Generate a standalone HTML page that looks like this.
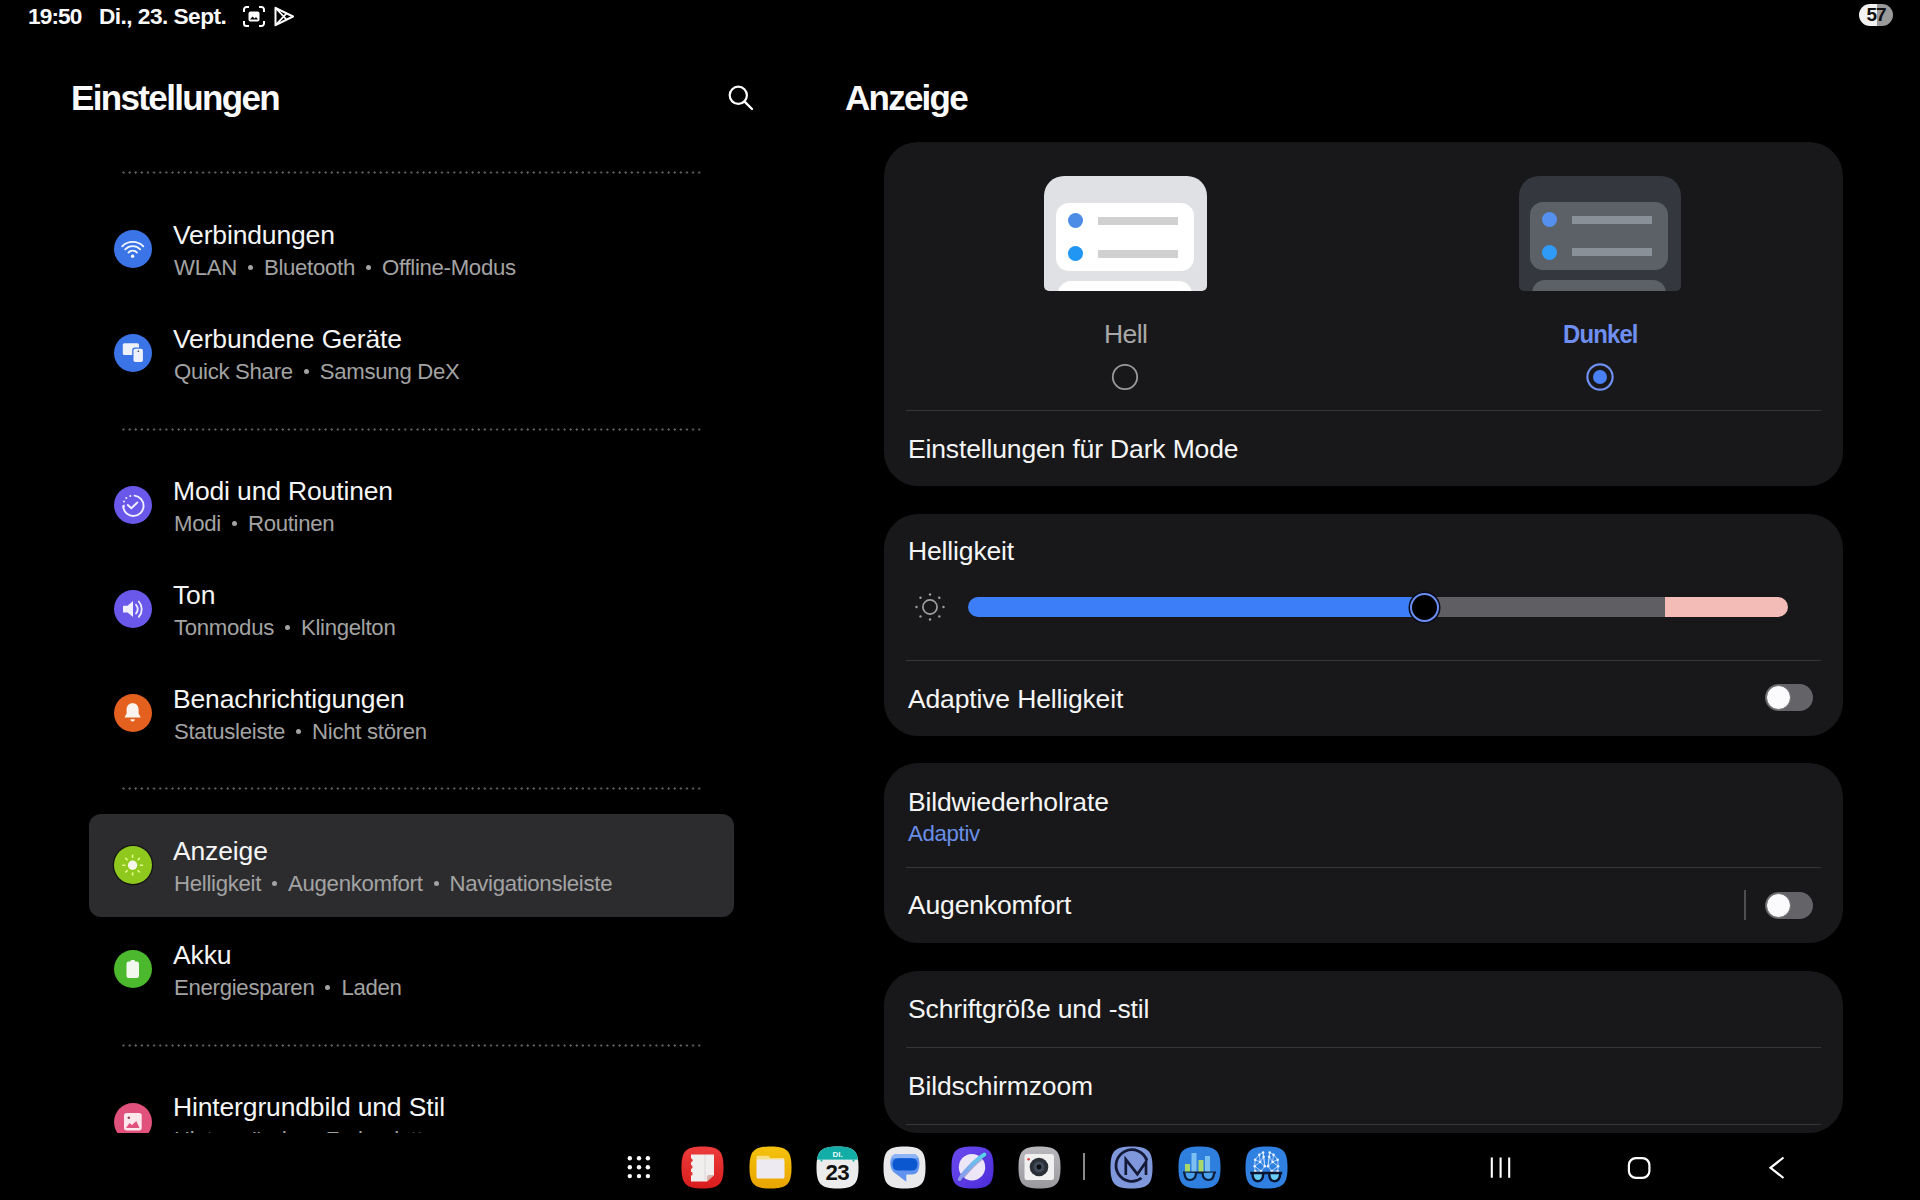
<!DOCTYPE html>
<html><head><meta charset="utf-8">
<style>
*{margin:0;padding:0;box-sizing:border-box}
html,body{width:1920px;height:1200px;background:#000;overflow:hidden}
body{position:relative;font-family:"Liberation Sans",sans-serif;color:#fafafa}
.a{position:absolute;white-space:nowrap}
svg{position:absolute;overflow:visible}
.t{font-size:26.5px;line-height:30px;color:#f5f5f5;letter-spacing:-0.15px}
.s{font-size:22.2px;line-height:26px;color:#a3a3a3;letter-spacing:-0.3px}
.dot{display:inline-block;width:5px;height:5px;border-radius:50%;background:#a3a3a3;vertical-align:middle;margin:0 11px;position:relative;top:-2px}
.sep{position:absolute;left:122px;width:582px;height:3px;background-image:radial-gradient(circle at 1.5px 1.5px,#666 0.9px,transparent 1.3px);background-size:6.14px 3px}
.card{position:absolute;left:884px;width:959px;background:#18181a;border-radius:34px}
.hr{position:absolute;left:906px;width:915px;height:1px;background:#363638}
.clip{position:absolute;left:0;top:0;width:860px;height:1133px;overflow:hidden}
</style></head><body>
<!-- STATUS BAR -->
<div class="a" id="time" style="left:28px;top:2px;font-size:22.7px;font-weight:bold;line-height:28px;letter-spacing:-0.9px">19:50</div>
<div class="a" id="date" style="left:99px;top:2px;font-size:22.7px;font-weight:bold;line-height:28px;letter-spacing:-0.55px">Di., 23. Sept.</div>
<svg style="left:243px;top:6px" width="22" height="21" viewBox="0 0 22 21">
 <path d="M1 6V3.5A2.5 2.5 0 0 1 3.5 1H6M16 1h2.5A2.5 2.5 0 0 1 21 3.5V6M21 15v2.5A2.5 2.5 0 0 1 18.5 20H16M6 20H3.5A2.5 2.5 0 0 1 1 17.5V15" fill="none" stroke="#fff" stroke-width="2"/>
 <rect x="5.5" y="5.5" width="11" height="10" rx="2" fill="#fff"/>
 <path d="M7 13.5l2.5-3 2 2 1.5-1.5 2 2.5z" fill="#000"/>
</svg>
<svg style="left:273px;top:6px" width="22" height="21" viewBox="0 0 22 21">
 <path d="M2.5 1.8L20 10.5L2.5 19.2Z" fill="none" stroke="#fff" stroke-width="2" stroke-linejoin="round"/>
 <path d="M2.8 2.2L13.5 13.5M2.8 18.8L13.5 7.5" fill="none" stroke="#fff" stroke-width="1.8"/>
</svg>
<!-- battery -->
<div class="a" style="left:1859px;top:4px;width:34px;height:22px;border-radius:11px;background:linear-gradient(90deg,#f2f2f2 0,#f2f2f2 18px,#9a9a9a 18px,#9a9a9a 100%)"></div>
<div class="a" id="batt" style="left:1862px;top:3px;width:28px;text-align:center;font-size:19px;font-weight:bold;line-height:24px;color:#111;letter-spacing:-1px">57</div>

<!-- HEADERS -->
<div class="a" id="ttl" style="left:71px;top:78px;font-size:35px;font-weight:bold;line-height:40px;letter-spacing:-1.65px">Einstellungen</div>
<svg style="left:728px;top:85px" width="26" height="26" viewBox="0 0 26 26">
 <circle cx="10.3" cy="10.3" r="8.6" fill="none" stroke="#fff" stroke-width="2.2"/>
 <path d="M16.6 16.6L24 24" stroke="#fff" stroke-width="2.4" stroke-linecap="round"/>
</svg>
<div class="a" id="ttl2" style="left:845px;top:78px;font-size:35px;font-weight:bold;line-height:40px;letter-spacing:-1.75px">Anzeige</div>

<!-- LEFT LIST -->
<div class="clip">
<div class="sep" style="top:171px"></div>
<div class="sep" style="top:428px"></div>
<div class="sep" style="top:787px"></div>
<div class="sep" style="top:1044px"></div>

<div class="a" style="left:89px;top:814px;width:645px;height:103px;background:#2c2c2f;border-radius:12px"></div>

<!-- Verbindungen -->
<svg style="left:108px;top:224px" width="50" height="50" viewBox="0 0 50 50">
 <circle cx="25" cy="25" r="19" fill="#3b74e6"/>
 <path d="M14.2 22.3A15 15 0 0 1 35.3 22.3M17.2 25.3A10.4 10.4 0 0 1 32.2 25.3M20.4 28.6A5.6 5.6 0 0 1 29 28.6" fill="none" stroke="#f2f6ff" stroke-width="1.8" stroke-linecap="round"/>
 <circle cx="24.6" cy="32.3" r="1.7" fill="#f2f6ff"/>
</svg>
<div class="a t" id="l1" style="left:173px;top:220px">Verbindungen</div>
<div class="a s" id="s1" style="left:174px;top:255px">WLAN<span class="dot"></span>Bluetooth<span class="dot"></span>Offline-Modus</div>

<!-- Verbundene Geraete -->
<svg style="left:108px;top:328px" width="50" height="50" viewBox="0 0 50 50">
 <circle cx="25" cy="25" r="19" fill="#3b74e6"/>
 <rect x="14.8" y="15.2" width="16.2" height="11.9" rx="1.6" fill="#eef0fa"/>
 <rect x="24.2" y="19.4" width="12" height="16" rx="2.6" fill="#3b74e6"/>
 <rect x="25.5" y="20.7" width="9.4" height="13.4" rx="1.8" fill="#eef0fa"/>
 <circle cx="30.3" cy="23.3" r="0.8" fill="#333"/>
</svg>
<div class="a t" id="l2" style="left:173px;top:324px">Verbundene Geräte</div>
<div class="a s" id="s2" style="left:174px;top:359px">Quick Share<span class="dot"></span>Samsung DeX</div>

<!-- Modi -->
<svg style="left:108px;top:480px" width="50" height="50" viewBox="0 0 50 50">
 <circle cx="25" cy="25" r="19" fill="#6a58ea"/>
 <path d="M26.6 15.6A10.2 10.2 0 1 1 15.3 27.3" fill="none" stroke="#f0eeff" stroke-width="1.9" stroke-linecap="round"/>
 <circle cx="22.3" cy="15.9" r="1" fill="#f0eeff"/><circle cx="18.3" cy="18.1" r="1" fill="#f0eeff"/><circle cx="16" cy="21.5" r="1" fill="#f0eeff"/>
 <path d="M13.6 26.2L16.4 24.2L16.9 27.6Z" fill="#f0eeff"/>
 <path d="M19.8 25L23.3 28.3L29.3 22.5" fill="none" stroke="#f0eeff" stroke-width="1.9" stroke-linecap="round" stroke-linejoin="round"/>
</svg>
<div class="a t" id="l3" style="left:173px;top:476px">Modi und Routinen</div>
<div class="a s" id="s3" style="left:174px;top:511px">Modi<span class="dot"></span>Routinen</div>

<!-- Ton -->
<svg style="left:108px;top:584px" width="50" height="50" viewBox="0 0 50 50">
 <circle cx="25" cy="25" r="19" fill="#6a58ea"/>
 <path d="M15 22.2Q15 21.8 15.5 21.8H19.6L25 17V33L19.6 28.6H15.5Q15 28.6 15 28.2Z" fill="#f0eeff"/>
 <path d="M28 20.8A7 7 0 0 1 28 29.5M30.8 17.5A11.5 11.5 0 0 1 30.8 32.8" fill="none" stroke="#f0eeff" stroke-width="1.8" stroke-linecap="round"/>
</svg>
<div class="a t" id="l4" style="left:173px;top:580px">Ton</div>
<div class="a s" id="s4" style="left:174px;top:615px">Tonmodus<span class="dot"></span>Klingelton</div>

<!-- Benachrichtigungen -->
<svg style="left:108px;top:688px" width="50" height="50" viewBox="0 0 50 50">
 <circle cx="25" cy="25" r="19" fill="#e3601e"/>
 <path d="M24.6 15.3C20.8 15.3 18.6 18 18.6 21.6V25.5L16.4 29.5H32.8L30.6 25.5V21.6C30.6 18 28.4 15.3 24.6 15.3Z" fill="#fbf3ee"/>
 <path d="M22.4 31.2H26.8A2.2 2.2 0 0 1 22.4 31.2Z" fill="#fbf3ee"/>
</svg>
<div class="a t" id="l5" style="left:173px;top:684px">Benachrichtigungen</div>
<div class="a s" id="s5" style="left:174px;top:719px">Statusleiste<span class="dot"></span>Nicht stören</div>

<!-- Anzeige -->
<svg style="left:108px;top:840px" width="50" height="50" viewBox="0 0 50 50">
 <circle cx="25" cy="25" r="20.3" fill="#141414"/>
 <circle cx="25" cy="25" r="19" fill="#90c91e"/>
 <circle cx="24.6" cy="25.2" r="4.7" fill="#f4f7ea"/>
 <g stroke="#e6ff8a" stroke-width="1.6" stroke-linecap="round">
  <path d="M24.6 15.3V17.3M24.6 33.1V35M14.8 25.2H16.8M32.4 25.2H34.4M17.8 18.4L19.1 19.7M30.1 30.7L31.4 32M17.8 32L19.1 30.7M30.1 19.7L31.4 18.4"/>
 </g>
</svg>
<div class="a t" id="l6" style="left:173px;top:836px">Anzeige</div>
<div class="a s" id="s6" style="left:174px;top:871px">Helligkeit<span class="dot"></span>Augenkomfort<span class="dot"></span>Navigationsleiste</div>

<!-- Akku -->
<svg style="left:108px;top:944px" width="50" height="50" viewBox="0 0 50 50">
 <circle cx="25" cy="25" r="19" fill="#4cb82e"/>
 <rect x="22.5" y="16" width="4.5" height="3" rx="1" fill="#f2f8ee"/>
 <rect x="18.5" y="17.5" width="12.5" height="16.5" rx="2.2" fill="#f2f8ee"/>
</svg>
<div class="a t" id="l7" style="left:173px;top:940px">Akku</div>
<div class="a s" id="s7" style="left:174px;top:975px">Energiesparen<span class="dot"></span>Laden</div>

<!-- Hintergrundbild -->
<svg style="left:108px;top:1090px" width="50" height="50" viewBox="0 0 50 50">
 <circle cx="25" cy="32" r="19" fill="#e0527c"/>
 <rect x="16" y="22.9" width="17.7" height="17.5" rx="2.6" fill="#fde8ee"/>
 <path d="M18 38L21.5 33L24 35L28.3 31L31.5 38Z" fill="#e0527c"/>
 <circle cx="20.8" cy="27.7" r="1.3" fill="#9a4058"/>
</svg>
<div class="a t" id="l8" style="left:173px;top:1092px">Hintergrundbild und Stil</div>
<div class="a s" style="left:174px;top:1127px">Hintergründe<span class="dot"></span>Farbpalette</div>
</div>

<!-- RIGHT CARDS -->
<div class="card" style="top:142px;height:344px"></div>
<div class="card" style="top:514px;height:222px"></div>
<div class="card" style="top:763px;height:180px"></div>
<div class="card" style="top:971px;height:162px"></div>

<div class="hr" style="top:410px"></div>
<div class="hr" style="top:660px"></div>
<div class="hr" style="top:867px"></div>
<div class="hr" style="top:1047px"></div>
<div class="hr" style="top:1124px"></div>

<!-- preview light -->
<div class="a" style="left:1044px;top:176px;width:163px;height:115px;background:#dfe1e4;border-radius:20px 20px 5px 5px;overflow:hidden">
 <div class="a" style="left:12px;top:27px;width:138px;height:68px;background:#fff;border-radius:13px"></div>
 <div class="a" style="left:24px;top:37px;width:15px;height:15px;border-radius:50%;background:#4c8be6"></div>
 <div class="a" style="left:24px;top:70px;width:15px;height:15px;border-radius:50%;background:#2196f3"></div>
 <div class="a" style="left:54px;top:41px;width:80px;height:8px;background:#d0d0d0"></div>
 <div class="a" style="left:54px;top:74px;width:80px;height:8px;background:#d0d0d0"></div>
 <div class="a" style="left:14px;top:105px;width:134px;height:40px;background:#fff;border-radius:13px"></div>
</div>
<!-- preview dark -->
<div class="a" style="left:1519px;top:176px;width:162px;height:115px;background:#34383e;border-radius:20px 20px 5px 5px;overflow:hidden">
 <div class="a" style="left:11px;top:26px;width:138px;height:68px;background:#5b6167;border-radius:13px"></div>
 <div class="a" style="left:23px;top:36px;width:15px;height:15px;border-radius:50%;background:#5590ee"></div>
 <div class="a" style="left:23px;top:69px;width:15px;height:15px;border-radius:50%;background:#2f9bf7"></div>
 <div class="a" style="left:53px;top:40px;width:80px;height:8px;background:#8a9097"></div>
 <div class="a" style="left:53px;top:72px;width:80px;height:8px;background:#8a9097"></div>
 <div class="a" style="left:13px;top:104px;width:134px;height:40px;background:#5b6167;border-radius:13px"></div>
</div>

<div class="a t" id="hell" style="left:1104px;top:319px;color:#a8a8a8;letter-spacing:-0.6px">Hell</div>
<div class="a t" id="dunkel" style="left:1563px;top:319px;color:#6f8ff0;font-weight:bold;letter-spacing:-0.9px;transform:scaleX(0.9);transform-origin:0 0">Dunkel</div>
<svg style="left:1111px;top:363px" width="28" height="28" viewBox="0 0 28 28"><circle cx="14" cy="14" r="12.2" fill="none" stroke="#9a9a9a" stroke-width="1.8"/></svg>
<svg style="left:1586px;top:363px" width="28" height="28" viewBox="0 0 28 28"><circle cx="14" cy="14" r="12.6" fill="none" stroke="#6f8ff0" stroke-width="2.2"/><circle cx="14" cy="14" r="7" fill="#4a80f5"/></svg>

<div class="a t" id="r1" style="left:908px;top:434px">Einstellungen für Dark Mode</div>
<div class="a t" id="r2" style="left:908px;top:536px">Helligkeit</div>

<!-- sun -->
<svg style="left:910px;top:587px" width="40" height="40" viewBox="0 0 40 40">
 <circle cx="20" cy="20" r="7.1" fill="none" stroke="#a0a0a0" stroke-width="1.7"/>
 <g fill="#a0a0a0"><circle cx="20" cy="7.5" r="1.2"/><circle cx="20" cy="32.5" r="1.2"/><circle cx="6.5" cy="20" r="1.2"/><circle cx="33.5" cy="20" r="1.2"/><circle cx="10.5" cy="10.8" r="1.2"/><circle cx="29.3" cy="10.8" r="1.2"/><circle cx="10.5" cy="29.4" r="1.2"/><circle cx="29.3" cy="29.4" r="1.2"/></g>
</svg>
<!-- slider -->
<div class="a" style="left:968px;top:597px;width:820px;height:20px;border-radius:10px;background:linear-gradient(90deg,#3c7ef7 0,#3c7ef7 456px,#5f5e62 456px,#5f5e62 697px,#f3bcb7 697px,#f3bcb7 100%)"></div>
<div class="a" style="left:1410px;top:593px;width:29px;height:29px;border-radius:50%;background:#000;border:2.3px solid #6a8ef2;box-shadow:0 0 0 1.5px #0a0a1a"></div>

<div class="a t" id="r3" style="left:908px;top:684px">Adaptive Helligkeit</div>
<!-- toggle 1 -->
<div class="a" style="left:1765px;top:684px;width:48px;height:27px;border-radius:14px;background:#646367"></div>
<div class="a" style="left:1766px;top:685px;width:25px;height:25px;border-radius:50%;background:#fbfbfd;border:1.5px solid #6c6c70"></div>

<div class="a t" id="r4" style="left:908px;top:787px">Bildwiederholrate</div>
<div class="a s" id="r4s" style="left:908px;top:821px;color:#6a8fe8;letter-spacing:-0.3px">Adaptiv</div>
<div class="a t" id="r5" style="left:908px;top:890px">Augenkomfort</div>
<div class="a" style="left:1744px;top:890px;width:2px;height:30px;background:#4e4e50"></div>
<!-- toggle 2 -->
<div class="a" style="left:1765px;top:892px;width:48px;height:27px;border-radius:14px;background:#646367"></div>
<div class="a" style="left:1766px;top:893px;width:25px;height:25px;border-radius:50%;background:#fbfbfd;border:1.5px solid #6c6c70"></div>

<div class="a t" id="r6" style="left:908px;top:994px">Schriftgröße und -stil</div>
<div class="a t" id="r7" style="left:908px;top:1071px">Bildschirmzoom</div>

<!-- DOCK -->
<svg style="left:620px;top:1150px" width="40" height="36" viewBox="0 0 40 36">
 <g fill="#fff"><circle cx="9.8" cy="8.3" r="2.2"/><circle cx="19" cy="8.3" r="2.2"/><circle cx="27.9" cy="8.3" r="2.2"/><circle cx="9.8" cy="17.2" r="2.2"/><circle cx="19" cy="17.2" r="2.2"/><circle cx="27.9" cy="17.2" r="2.2"/><circle cx="9.8" cy="26.1" r="2.2"/><circle cx="19" cy="26.1" r="2.2"/><circle cx="27.9" cy="26.1" r="2.2"/></g>
</svg>
<!-- notes -->
<svg style="left:681px;top:1146px" width="43" height="43" viewBox="0 0 43 43">
 <defs><linearGradient id="gr" x1="0" y1="0" x2="0" y2="1"><stop offset="0" stop-color="#ee3c3c"/><stop offset="1" stop-color="#d81c1c"/></linearGradient></defs>
 <path d="M21.5 0.5C5 0.5 0.5 5 0.5 21.5S5 42.5 21.5 42.5S42.5 38 42.5 21.5S38 0.5 21.5 0.5Z" fill="url(#gr)"/>
 <path d="M10 8.5H33V29L26 35.5H10Z" fill="#f1eeee"/>
 <path d="M33 29H27.5Q26 29 26 30.5V35.5Z" fill="#d9b3ae"/>
 <g fill="#e0302f"><circle cx="9.6" cy="14.2" r="2"/><circle cx="9.6" cy="21" r="2"/><circle cx="9.6" cy="27.8" r="2"/></g>
 <path d="M24 9V34" stroke="#dcd6d8" stroke-width="1"/>
</svg>
<!-- files -->
<svg style="left:749px;top:1146px" width="43" height="43" viewBox="0 0 43 43">
 <defs><linearGradient id="gy" x1="0" y1="0" x2="0" y2="1"><stop offset="0" stop-color="#f4c20d"/><stop offset="1" stop-color="#e9a400"/></linearGradient></defs>
 <path d="M21.5 0.5C5 0.5 0.5 5 0.5 21.5S5 42.5 21.5 42.5S42.5 38 42.5 21.5S38 0.5 21.5 0.5Z" fill="url(#gy)"/>
 <path d="M7.5 11Q7.5 9.8 8.7 9.8H19.5L21.5 12H34.3Q35.5 12 35.5 13.2V14H7.5Z" fill="#f7df8a"/>
 <rect x="7.5" y="13.5" width="28" height="19" rx="1.5" fill="#eeeaf2"/>
</svg>
<!-- calendar -->
<svg style="left:816px;top:1146px" width="43" height="43" viewBox="0 0 43 43">
 <defs><clipPath id="sq"><path d="M21.5 0.5C5 0.5 0.5 5 0.5 21.5S5 42.5 21.5 42.5S42.5 38 42.5 21.5S38 0.5 21.5 0.5Z"/></clipPath></defs>
 <g clip-path="url(#sq)"><rect width="43" height="43" fill="#ececec"/><rect width="43" height="13.6" fill="#12ada6"/></g>
 <path d="M5.5 13.5V15.5M37.5 13.5V15.5" stroke="#12ada6" stroke-width="1.8"/>
 <text x="21.5" y="11" text-anchor="middle" font-family="Liberation Sans" font-weight="bold" font-size="8" fill="#e8fbf8">DI.</text>
 <text x="21.3" y="34.4" text-anchor="middle" font-family="Liberation Sans" font-weight="bold" font-size="22.3" fill="#111" letter-spacing="-0.6">23</text>
</svg>
<!-- messages -->
<svg style="left:883px;top:1146px" width="43" height="43" viewBox="0 0 43 43">
 <path d="M21.5 0.5C5 0.5 0.5 5 0.5 21.5S5 42.5 21.5 42.5S42.5 38 42.5 21.5S38 0.5 21.5 0.5Z" fill="#e9e9eb"/>
 <path d="M14 8H29.5Q36.5 8 36.5 17.5Q36.5 28.5 29 28.5H23.3V35.8L12.5 27.5Q7.3 24.5 7.3 17Q7.3 8 14 8Z" fill="#5f93ee"/>
 <path d="M14 8H29.5Q34 8 35.5 12H10Q8 14 7.5 17Q7.3 8 14 8Z" fill="#8db5f8"/>
 <path d="M15.5 12.3H28.5Q34.5 12.3 34.5 18.4Q34.5 24.5 28.5 24.5H15.5Q9.5 24.5 9.5 18.4Q9.5 12.3 15.5 12.3Z" fill="#0b57d0"/>
</svg>
<!-- internet -->
<svg style="left:951px;top:1146px" width="43" height="43" viewBox="0 0 43 43">
 <defs><linearGradient id="gp" x1="0" y1="0" x2="1" y2="1"><stop offset="0" stop-color="#6c4cf0"/><stop offset="1" stop-color="#4b2bd8"/></linearGradient></defs>
 <path d="M21.5 0.5C5 0.5 0.5 5 0.5 21.5S5 42.5 21.5 42.5S42.5 38 42.5 21.5S38 0.5 21.5 0.5Z" fill="url(#gp)"/>
 <defs><linearGradient id="gring" x1="0" y1="1" x2="1" y2="0"><stop offset="0" stop-color="#8e96f0"/><stop offset="1" stop-color="#56d2ea"/></linearGradient></defs>
 <circle cx="21" cy="21.2" r="13.2" fill="#ece6f6"/>
 <path d="M8.8 33.5C12.5 28.5 24 15 33.8 9" stroke="#3a2a9a" stroke-width="5.2" stroke-linecap="round" fill="none" opacity="0.35"/>
 <path d="M8.5 33.2C12 28 23.5 14.5 33.5 8.5" stroke="url(#gring)" stroke-width="3.8" stroke-linecap="round" fill="none"/>
</svg>
<!-- camera -->
<svg style="left:1018px;top:1146px" width="43" height="43" viewBox="0 0 43 43">
 <defs><linearGradient id="gc" x1="0" y1="0" x2="0" y2="1"><stop offset="0" stop-color="#b9b9bd"/><stop offset="1" stop-color="#9a9a9e"/></linearGradient></defs>
 <path d="M21.5 0.5C5 0.5 0.5 5 0.5 21.5S5 42.5 21.5 42.5S42.5 38 42.5 21.5S38 0.5 21.5 0.5Z" fill="url(#gc)"/>
 <rect x="6.5" y="8" width="29.5" height="26" rx="2.5" fill="#f0f0f0"/>
 <circle cx="21" cy="21" r="9.3" fill="#2b2f36"/>
 <circle cx="21" cy="21" r="5.5" fill="#404a58"/>
 <circle cx="21" cy="21" r="2.4" fill="#0c0c10"/>
 <circle cx="10.6" cy="13.3" r="1.3" fill="#e04040"/>
</svg>
<div class="a" style="left:1083px;top:1153px;width:2px;height:27px;background:#8a8a8a"></div>
<!-- M logo -->
<svg style="left:1110px;top:1146px" width="43" height="43" viewBox="0 0 43 43">
 <path d="M21.5 0.5C5 0.5 0.5 5 0.5 21.5S5 42.5 21.5 42.5S42.5 38 42.5 21.5S38 0.5 21.5 0.5Z" fill="#7f98dc"/>
 <path d="M36.8 14.5A15.8 15.8 0 1 0 31.5 32" fill="none" stroke="#141a38" stroke-width="2.8"/>
 <path d="M15.8 29V13.5L27.4 28.2L36 15.8V29" fill="none" stroke="#141a38" stroke-width="2.7" stroke-linejoin="miter"/>
</svg>
<!-- geekbench -->
<svg style="left:1178px;top:1146px" width="43" height="43" viewBox="0 0 43 43">
 <path d="M21.5 0.5C5 0.5 0.5 5 0.5 21.5S5 42.5 21.5 42.5S42.5 38 42.5 21.5S38 0.5 21.5 0.5Z" fill="#2f7fde"/>
 <rect x="7" y="18" width="5" height="8" fill="#a9d86a"/>
 <rect x="13.5" y="7" width="5" height="19" fill="#7cc0f2"/>
 <rect x="20.5" y="14" width="5" height="12" fill="#a9d86a"/>
 <rect x="27" y="10" width="5" height="16" fill="#7cc0f2"/>
 <path d="M5 26.5H38" stroke="#0c1c3a" stroke-width="2.2"/>
 <path d="M6.5 26.5Q6.5 34 12 34Q17.5 34 18 27M24.5 27Q25 34 30.5 34Q36 34 36 26.5" fill="#4aa1ef" stroke="#0c1c3a" stroke-width="2.2"/>
</svg>
<!-- geekbench ai -->
<svg style="left:1245px;top:1146px" width="43" height="43" viewBox="0 0 43 43">
 <path d="M21.5 0.5C5 0.5 0.5 5 0.5 21.5S5 42.5 21.5 42.5S42.5 38 42.5 21.5S38 0.5 21.5 0.5Z" fill="#2f80e0"/>
 <path d="M18.1 6.4L14.3 8.7M18.1 6.4L18.6 10.7M14.3 8.7L10.1 13.7M14.3 8.7L15.2 16.0M18.6 10.7L15.2 16.0M10.1 13.7L15.2 16.0M10.1 13.7L9.7 20.3M15.2 16.0L19.8 20.3M15.2 16.0L9.7 20.3M19.8 20.3L16.1 24.9M9.7 20.3L16.1 24.9M9.7 20.3L10.1 25.2M16.1 24.9L10.1 25.2M18.6 10.7L19.8 20.3M18.1 6.4L19.8 20.3M24.7 6.4L28.5 8.7M24.7 6.4L24.2 10.7M28.5 8.7L32.7 13.7M28.5 8.7L27.6 16.0M24.2 10.7L27.6 16.0M32.7 13.7L27.6 16.0M32.7 13.7L33.1 20.3M27.6 16.0L23.0 20.3M27.6 16.0L33.1 20.3M23.0 20.3L26.7 24.9M33.1 20.3L26.7 24.9M33.1 20.3L32.7 25.2M26.7 24.9L32.7 25.2M24.2 10.7L23.0 20.3M24.7 6.4L23.0 20.3" fill="none" stroke="#cfe4ff" stroke-width="0.8"/>
 <g fill="#eef6ff"><circle cx="18.1" cy="6.4" r="1.25"/><circle cx="14.3" cy="8.7" r="1.25"/><circle cx="18.6" cy="10.7" r="1.25"/><circle cx="10.1" cy="13.7" r="1.25"/><circle cx="15.2" cy="16.0" r="1.25"/><circle cx="19.8" cy="20.3" r="1.25"/><circle cx="9.7" cy="20.3" r="1.25"/><circle cx="16.1" cy="24.9" r="1.25"/><circle cx="10.1" cy="25.2" r="1.25"/><circle cx="24.7" cy="6.4" r="1.25"/><circle cx="28.5" cy="8.7" r="1.25"/><circle cx="24.2" cy="10.7" r="1.25"/><circle cx="32.7" cy="13.7" r="1.25"/><circle cx="27.6" cy="16.0" r="1.25"/><circle cx="23.0" cy="20.3" r="1.25"/><circle cx="33.1" cy="20.3" r="1.25"/><circle cx="26.7" cy="24.9" r="1.25"/><circle cx="32.7" cy="25.2" r="1.25"/></g>
 <path d="M7.5 27.5Q7.5 35.2 12.8 35.2Q18 35.2 18.2 28M24.2 28Q24.4 35.2 29.6 35.2Q35 35.2 35.2 27.5" fill="#69cdf6" stroke="#0a1530" stroke-width="2.4"/>
 <path d="M5.3 27H37.2" stroke="#0a1530" stroke-width="2.4"/>
</svg>
<!-- nav buttons -->
<svg style="left:1485px;top:1152px" width="30" height="32" viewBox="0 0 30 32">
 <path d="M6.8 5.4V25.7M15.6 5.4V25.7M24.2 5.4V25.7" stroke="#fff" stroke-width="2.1"/>
</svg>
<svg style="left:1622px;top:1151px" width="34" height="34" viewBox="0 0 34 34">
 <rect x="6.9" y="7.1" width="20.5" height="19.8" rx="7" fill="none" stroke="#fff" stroke-width="2.2"/>
</svg>
<svg style="left:1762px;top:1151px" width="30" height="34" viewBox="0 0 30 34">
 <path d="M21.5 6.5L8.5 16.8L21.5 27" fill="none" stroke="#fff" stroke-width="2.2"/>
</svg>
</body></html>
